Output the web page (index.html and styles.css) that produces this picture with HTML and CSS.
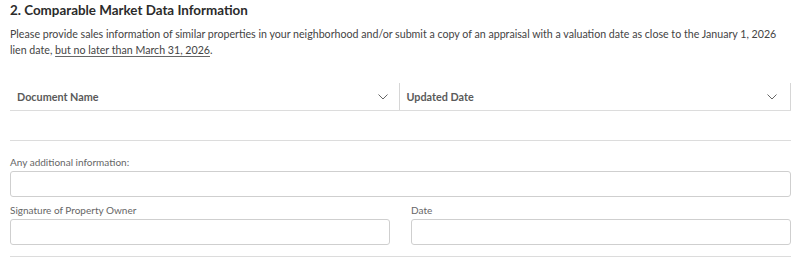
FILE: index.html
```html
<!DOCTYPE html>
<html>
<head>
<meta charset="utf-8">
<link rel="stylesheet" href="styles.css">
</head>
<body>
<section class="section">
  <h2 class="title">2. Comparable Market Data Information</h2>
  <p class="desc">Please provide sales information of similar properties in your neighborhood and/or submit a copy of an appraisal with a valuation date as close to the January 1, 2026 lien date, <u>but no later than March 31, 2026</u>.</p>

  <div class="table">
    <div class="thead">
      <div class="th th-first">
        <span>Document Name</span>
        <svg class="chev" width="10" height="6" viewBox="0 0 10 6"><path d="M0.5 0.5 L5 5 L9.5 0.5" fill="none" stroke="#666" stroke-width="1"/></svg>
      </div>
      <div class="th th-second">
        <span>Updated Date</span>
        <svg class="chev" width="10" height="6" viewBox="0 0 10 6"><path d="M0.5 0.5 L5 5 L9.5 0.5" fill="none" stroke="#666" stroke-width="1"/></svg>
      </div>
    </div>
    <div class="tbody"></div>
  </div>

  <div class="field field-full">
    <label class="label">Any additional information:</label>
    <div class="input"></div>
  </div>

  <div class="row">
    <div class="field">
      <label class="label">Signature of Property Owner</label>
      <div class="input"></div>
    </div>
    <div class="field">
      <label class="label">Date</label>
      <div class="input"></div>
    </div>
  </div>
  <div class="bottom-rule"></div>
</section>
</body>
</html>
```

FILE: styles.css
```css
* { box-sizing: border-box; }
body {
  margin: 0;
  background: #fff;
  font-family: Lato, "Open Sans", sans-serif;
  color: #333;
}
.section {
  padding: 0 9px 0 10px;
}
.title {
  margin: 0;
  padding-top: 2px;
  font-size: 13.4px;
  line-height: 17px;
  font-weight: 700;
  color: #2b2b2b;
}
.desc {
  margin: 7px 0 0;
  font-size: 10.65px;
  line-height: 16px;
  color: #444;
}
.desc u {
  text-decoration-color: #666;
  text-underline-offset: 2px;
}
.table {
  margin-top: 25px;
}
.thead {
  display: flex;
  border-bottom: 1px solid #dcdcdc;
}
.th {
  flex: 1;
  display: flex;
  align-items: center;
  justify-content: space-between;
  height: 27px;
  font-size: 10.8px;
  font-weight: 700;
  color: #5a5a5a;
}
.th-first {
  padding: 0 11px 0 7px;
}
.th-second {
  border-left: 1px solid #d6d6d6;
  border-right: 1px solid #d6d6d6;
  padding: 0 13px 0 7px;
}
.chev { display: block; }
.tbody {
  height: 30px;
  border-bottom: 1px solid #dcdcdc;
}
.field {
  display: flex;
  flex-direction: column;
  flex: 1;
}
.field-full {
  margin-top: 15px;
}
.label {
  font-size: 10px;
  line-height: 12px;
  color: #666;
  margin-bottom: 3px;
}
.input {
  height: 26px;
  border: 1px solid #cfcfcf;
  border-radius: 3px;
}
.row {
  display: flex;
  gap: 21px;
  margin-top: 7px;
}
.bottom-rule {
  margin-top: 11px;
  border-bottom: 1px solid #dcdcdc;
}
```
